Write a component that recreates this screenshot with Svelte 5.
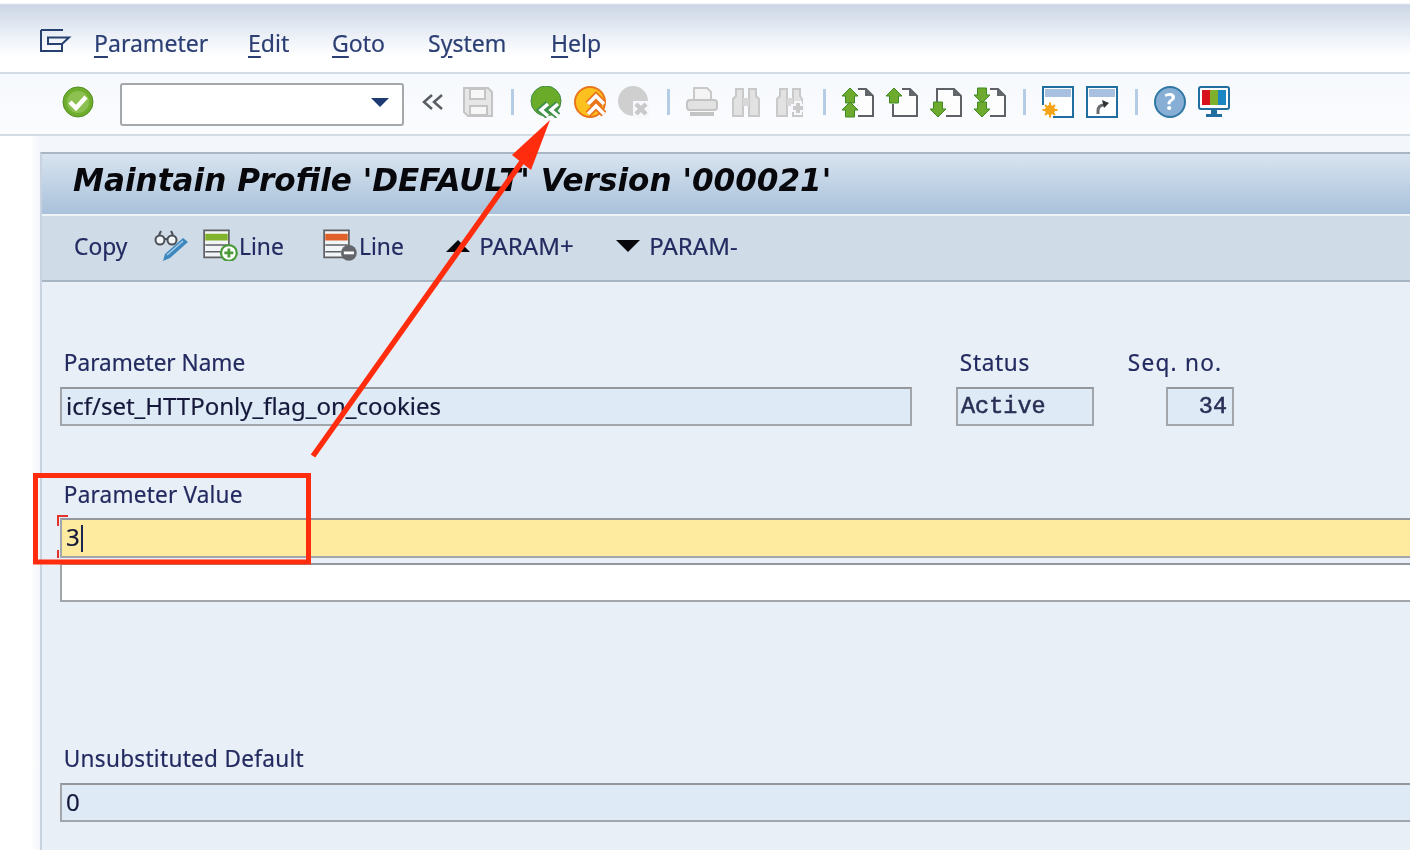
<script>
  const menus = [
    { key: "P", rest: "arameter" },
    { key: "E", rest: "dit" },
    { key: "G", rest: "oto" },
    { pre: "S", key: "y", rest: "stem" },
    { key: "H", rest: "elp" },
  ];
</script>

{#snippet doc(d)}
  <path {d} fill="#fdfdfe" stroke="#5d6064" stroke-width="2" />
  <path d="M23 2l8 8h-8z" fill="#63676b" />
{/snippet}

{#snippet arrowUp(y)}
  <path d="M8 {y}l8 8h-3.500v7h-9v-7H0z" fill="#6eaa2e" stroke="#3f8a22" />
{/snippet}

{#snippet arrowDown(y)}
  <path d="M8 {y}l8 -8h-3.500v-7h-9v7H0z" fill="#6eaa2e" stroke="#3f8a22" />
{/snippet}

<div class="screen">
  <header class="menubar soft">
    <svg class="menu-icon" width="32" height="24" viewBox="0 0 32 24">
      <path d="M1 1h22M1 1v21h21v-8M8 8.500h21l-7 6.500H8z" fill="none" stroke="#26406f" stroke-width="2" />
    </svg>
    <nav class="menus">
      {#each menus as m}
        <span class="menu">{m.pre ?? ""}<u>{m.key}</u>{m.rest}</span>
      {/each}
    </nav>
  </header>

  <div class="toolbar soft">
    <svg class="icon" viewBox="0 0 32 32">
      <circle cx="16" cy="16" r="15" fill="#6fae2d" stroke="#4f8c22" />
      <circle cx="16" cy="16" r="11" fill="#8cc152" />
      <path d="M8 16l6 6 10-11" fill="none" stroke="#fff" stroke-width="4.500" />
    </svg>
    <div class="combo"><span class="combo-arrow"></span></div>
    <svg class="icon chevrons" viewBox="0 0 32 32">
      <path d="M15 9l-8 7 8 7M25 9l-8 7 8 7" fill="none" stroke="#595e64" stroke-width="2.500" />
    </svg>

    <svg class="icon" viewBox="0 0 32 32">
      <path d="M2 2h24l4 4v24H6l-4-4z" fill="#e6e6e6" stroke="#c4c4c4" stroke-width="2" />
      <path d="M8 3h15v10H8zM8 20h17v9H8z" fill="#f7f7f7" stroke="#c4c4c4" stroke-width="2" />
    </svg>
    <i class="sep"></i>

    <div class="group">
      <svg class="icon" viewBox="0 0 32 32">
        <circle cx="16" cy="15" r="15" fill="#6bab2a" stroke="#3f8f45" />
        <path d="M18 18l-7 6 7 6M28 18l-7 6 7 6" fill="none" stroke="#3d8f4c" stroke-width="7" />
        <path d="M18 18l-7 6 7 6M28 18l-7 6 7 6" fill="none" stroke="#fff" stroke-width="3.500" />
      </svg>
      <svg class="icon" viewBox="0 0 32 32">
        <circle cx="16" cy="16" r="15" fill="#fdc11f" stroke="#e9741c" stroke-width="2" />
        <path d="M14 18l8-8 8 8M14 28l8-8 8 8" fill="none" stroke="#e9741c" stroke-width="7" />
        <path d="M14 18l8-8 8 8M14 28l8-8 8 8" fill="none" stroke="#fff" stroke-width="3.500" />
      </svg>
      <svg class="icon" viewBox="0 0 32 32">
        <circle cx="15" cy="15" r="15" fill="#cfcfcf" />
        <path d="M15 15h17v17H15z" fill="#f6f8fb" />
        <path d="M18 18l10 10M28 18L18 28" stroke="#c9c9c9" stroke-width="4.500" />
      </svg>
    </div>
    <i class="sep"></i>

    <div class="group">
      <svg class="icon" viewBox="0 0 32 32">
        <path d="M8 14V2h13l4 4v8" fill="#f4f4f4" stroke="#c9c9c9" stroke-width="2" />
        <rect x="1" y="14" width="30" height="10" rx="3" fill="#e2e2e2" stroke="#c4c4c4" stroke-width="2" />
        <path d="M4 28h24" stroke="#c4c4c4" stroke-width="4" />
      </svg>
      <svg class="icon" viewBox="0 0 32 32">
        <path d="M3 30V13l3-3V3h7v27zM19 30V3h7v7l3 3v17z" fill="#e2e2e2" stroke="#c9c9c9" stroke-width="2" />
        <path d="M13 12h6v8h-6z" fill="#d8d8d8" />
      </svg>
      <svg class="icon" viewBox="0 0 32 32">
        <path d="M3 30V13l3-3V3h7v27zM19 30V3h7v7l2 3v17z" fill="#e2e2e2" stroke="#c9c9c9" stroke-width="2" />
        <path d="M13 12h6v8h-6z" fill="#d8d8d8" />
        <path d="M24 15v14M17 22h14" stroke="#f6f8fb" stroke-width="8" />
        <path d="M24 17v10M19 22h10" stroke="#c9c9c9" stroke-width="4" />
      </svg>
    </div>
    <i class="sep"></i>

    <div class="group">
      <svg class="icon" viewBox="0 0 32 32">
        {@render doc("M16 3h8l7 7v20H16")}
        {@render arrowUp(2)}
        {@render arrowUp(16)}
      </svg>
      <svg class="icon" viewBox="0 0 32 32">
        {@render doc("M16 3h8l7 7v20H7V18")}
        {@render arrowUp(2)}
      </svg>
      <svg class="icon" viewBox="0 0 32 32">
        {@render doc("M7 16V3h17l7 7v20H16")}
        {@render arrowDown(31)}
      </svg>
      <svg class="icon" viewBox="0 0 32 32">
        {@render doc("M16 3h8l7 7v20H16")}
        {@render arrowDown(17)}
        {@render arrowDown(31)}
      </svg>
    </div>
    <i class="sep"></i>

    <div class="group">
      <svg class="icon" viewBox="0 0 32 32">
        <path d="M1 19V1h30v30H11" fill="#fff" stroke="#1f6e9f" stroke-width="2" />
        <path d="M3 3h26v8H3z" fill="#a9c1e0" />
        <circle cx="8" cy="24" r="5" fill="#f5a416" />
        <path d="M8 16.500v15M.5 24h15M3 19l10 10M13 19L3 29" stroke="#f5a416" stroke-width="2" />
      </svg>
      <svg class="icon" viewBox="0 0 32 32">
        <rect x="1" y="1" width="30" height="30" fill="#fff" stroke="#1f6e9f" stroke-width="2" />
        <path d="M3 3h26v8H3z" fill="#a9c1e0" />
        <path d="M12 28v-3c0-4 2-6 6-6" fill="none" stroke="#6a6d70" stroke-width="3" />
        <path d="M16 14l7 3-5 5z" fill="#333" />
      </svg>
    </div>
    <i class="sep"></i>

    <div class="group">
      <svg class="icon" viewBox="0 0 32 32">
        <circle cx="16" cy="16" r="15" fill="#87aed4" stroke="#2f77a5" stroke-width="2" />
        <text x="16" y="24" class="help-mark">?</text>
      </svg>
      <svg class="icon" viewBox="0 0 32 32">
        <rect x="1" y="1" width="30" height="22" rx="2" fill="#fff" stroke="#1f6e9f" stroke-width="2" />
        <path d="M4 4h8v15H4z" fill="#d8121a" />
        <path d="M12 4h8v15h-8z" fill="#7fb02c" />
        <path d="M20 4h8v15h-8z" fill="#1b86c4" />
        <path d="M13 23h6v5h-6zM8 28h16v3H8z" fill="#1f6e9f" />
      </svg>
    </div>
  </div>

  <main class="panel soft">
    <h1 class="title">Maintain Profile 'DEFAULT' Version '000021'</h1>

    <div class="actions">
      <span class="action copy">Copy</span>
      <svg class="action-icon glasses" width="34" height="31" viewBox="0 0 34 31">
        <circle cx="6" cy="10" r="4.500" fill="#f2f5f8" stroke="#4a4f56" stroke-width="2" />
        <circle cx="18" cy="10" r="4.500" fill="#f2f5f8" stroke="#4a4f56" stroke-width="2" />
        <path d="M10.500 9h3M5 5l2-4M19 5l-2-4" fill="none" stroke="#4a4f56" stroke-width="2" />
        <path d="M29 8l5 4-18 16-7 3 2-7z" fill="#3d87bf" />
        <path d="M13 25l16-14" stroke="#a8cdea" stroke-width="1.500" />
      </svg>
      <svg class="action-icon line-add" width="36" height="32" viewBox="0 0 32 28">
        <path d="M1 1h22v24H1z" fill="#f2f5f8" stroke="#5e6064" stroke-width="1.500" />
        <path d="M2 4h20v6H2z" fill="#82b32d" />
        <path d="M2 14h20M2 20h14" stroke="#5e6064" stroke-width="1.500" />
        <circle cx="23" cy="21" r="7" fill="#fff" stroke="#4a9a3a" stroke-width="2" />
        <path d="M23 17v8M19 21h8" stroke="#4a9a3a" stroke-width="2.500" />
      </svg>
      <span class="action after-icon">Line</span>
      <svg class="action-icon line-del" width="36" height="32" viewBox="0 0 32 28">
        <path d="M1 1h22v24H1z" fill="#f2f5f8" stroke="#5e6064" stroke-width="1.500" />
        <path d="M2 4h20v6H2z" fill="#e0602a" />
        <path d="M2 14h20M2 20h14" stroke="#5e6064" stroke-width="1.500" />
        <circle cx="23" cy="21" r="7" fill="#63666a" />
        <path d="M18.500 21h9" stroke="#fff" stroke-width="2.500" />
      </svg>
      <span class="action after-icon">Line</span>
      <span class="tri tri-up"></span>
      <span class="action param">PARAM+</span>
      <span class="tri tri-down"></span>
      <span class="action param">PARAM-</span>
    </div>

    <section class="form">
      <div class="row">
        <div class="field name">
          <span class="label">Parameter Name</span>
          <div class="input readonly">icf/set_HTTPonly_flag_on_cookies</div>
        </div>
        <div class="field status">
          <span class="label">Status</span>
          <div class="input readonly mono">Active</div>
        </div>
        <div class="field seq">
          <span class="label">Seq. no.</span>
          <div class="input readonly mono number">34</div>
        </div>
      </div>

      <div class="field value">
        <span class="label">Parameter Value</span>
        <div class="input focused">3<span class="caret"></span></div>
        <i class="req req-top"></i>
        <i class="req req-bottom"></i>
        <div class="input blank"></div>
      </div>

      <div class="field default">
        <span class="label">Unsubstituted Default</span>
        <div class="input readonly">0</div>
      </div>
    </section>
  </main>

  <svg class="annotation" width="1410" height="850" viewBox="0 0 1410 850">
    <path d="M35.500 475.500h273v86.500h-273z" fill="none" stroke="#ff2d0d" stroke-width="5" />
    <path d="M313 456L526 156" stroke="#ff2d0d" stroke-width="5.500" />
    <path d="M550 120L512 155 531 170z" fill="#ff2d0d" />
  </svg>
</div>

<style>
  :global(body) {
    margin: 0;
    background: #fff;
  }

  .screen {
    position: relative;
    width: 1410px;
    height: 850px;
    overflow: hidden;
    font-family: "Noto Sans", "Open Sans", sans-serif;
    color: #20265a;
    background: linear-gradient(90deg, #fff 0, #fff 30px, #f3f6fa 40px);
  }

  /* the reference is an upscaled capture, so everything under the markup is a bit soft */
  .soft {
    filter: blur(0.5px);
  }

  .menubar {
    box-sizing: border-box;
    display: flex;
    align-items: center;
    height: 74px;
    padding: 14px 0 0 40px;
    background: linear-gradient(180deg, #fff 0, #fff 3px, #ccd6e6 5px, #eef2f8 38px, #fff 56px);
    border-bottom: 2px solid #d3dbe5;
  }

  .menu-icon {
    margin-top: -4px;
  }

  .menus {
    display: flex;
    gap: 41px;
    margin-left: 22px;
  }

  .menu {
    font-size: 24px;
    line-height: 30px;
    color: #2c3f74;
    -webkit-text-stroke: 0.2px #2c3f74;
    transform: scaleX(0.96);
    transform-origin: left;
  }

  .menu:first-child {
    margin-right: -6px;
  }

  .menu u {
    text-underline-offset: 4px;
  }

  .toolbar {
    box-sizing: border-box;
    display: flex;
    align-items: center;
    height: 62px;
    padding: 0 0 4px 62px;
    background: linear-gradient(180deg, #f6f9fd, #fbfcfe);
    border-bottom: 2px solid #d3dbe5;
  }

  .icon {
    display: block;
    width: 32px;
    height: 32px;
    flex: none;
  }

  .group {
    display: flex;
    gap: 12px;
  }

  .sep {
    width: 3px;
    height: 26px;
    margin: 0 16.500px;
    background: #b4cde4;
    flex: none;
  }

  .combo {
    box-sizing: border-box;
    position: relative;
    width: 284px;
    height: 43px;
    margin: 4px 0 0 26px;
    background: #fff;
    border: 2px solid #a5a8ab;
    border-radius: 3px;
  }

  .combo-arrow {
    position: absolute;
    right: 13px;
    top: 13px;
    border-top: 9px solid #1d3a72;
    border-left: 9px solid transparent;
    border-right: 9px solid transparent;
  }

  .chevrons {
    margin: 0 13px;
  }

  .help-mark {
    font: bold 23px "Open Sans", sans-serif;
    fill: #fff;
    text-anchor: middle;
  }

  .panel {
    box-sizing: border-box;
    height: 715px;
    margin: 16px 0 0 40px;
    background: #e9eff6;
    border-left: 2px solid #c9d3e0;
    border-top: 2px solid #a8b5c3;
  }

  .title {
    box-sizing: border-box;
    height: 60px;
    margin: 0;
    padding-left: 31px;
    font: italic bold 31.100px/53px "DejaVu Sans", sans-serif;
    color: #08080c;
    white-space: nowrap;
    background: linear-gradient(180deg, #d8e4f0, #a9c1da);
  }

  .actions {
    box-sizing: border-box;
    display: flex;
    align-items: center;
    height: 68px;
    padding: 0 0 5px 32px;
    background: #cfdce8;
    border-top: 2px solid #eef3f8;
    border-bottom: 2px solid #a8b6c4;
  }

  .action {
    font-size: 24px;
    line-height: 30px;
    color: #222a60;
    -webkit-text-stroke: 0.2px #222a60;
    transform: scaleX(0.95);
    transform-origin: left;
    white-space: nowrap;
  }

  .action-icon {
    flex: none;
  }

  .glasses {
    margin-left: 24px;
  }

  .line-add {
    margin: -2px 0 0 15px;
  }

  .line-del {
    margin: -2px 0 0 38px;
  }

  .after-icon {
    margin-left: 0;
    width: 46px;
  }

  .tri {
    width: 0;
    height: 0;
    border-left: 12px solid transparent;
    border-right: 12px solid transparent;
  }

  .tri-up {
    margin: 0 9px 0 41px;
    border-bottom: 12px solid #08080c;
  }

  .tri-down {
    margin: 0 9px 0 0;
    border-top: 12px solid #08080c;
  }

  .param {
    width: 137px;
    transform: none;
  }

  .form {
    padding: 66px 0 0 18px;
  }

  .row {
    display: flex;
  }

  .field {
    position: relative;
  }

  .label {
    display: block;
    height: 30px;
    margin-bottom: 9px;
    padding-left: 4px;
    font-size: 23.500px;
    line-height: 28px;
    color: #222a60;
    -webkit-text-stroke: 0.2px #222a60;
    white-space: nowrap;
    transform: scaleX(0.96);
    transform-origin: left;
  }

  .status .label {
    letter-spacing: 0.7px;
  }

  .seq .label {
    letter-spacing: 1.3px;
  }

  .value .label {
    letter-spacing: 0.2px;
  }

  .default .label {
    letter-spacing: 0.3px;
  }

  .input {
    box-sizing: border-box;
    height: 39px;
    padding-left: 4px;
    border: 2px solid #a2a6aa;
    border-top-color: #94989c;
    font-size: 24px;
    line-height: 34px;
    color: #15183a;
    -webkit-text-stroke: 0.2px #15183a;
    white-space: nowrap;
  }

  .readonly {
    background: #deeaf5;
  }

  .mono {
    font-family: "Liberation Mono", monospace;
    font-size: 23.500px;
    line-height: 36px;
    color: #2a2f55;
    padding-left: 3px;
    -webkit-text-stroke: 0.5px #2a2f55;
  }

  .number {
    text-align: right;
    padding-right: 5px;
  }

  .name {
    width: 852px;
  }

  .status {
    width: 138px;
    margin-left: 44px;
  }

  .seq {
    margin-left: 30px;
    width: 110px;
  }

  .seq .input {
    width: 68px;
    margin-left: 42px;
  }

  .value {
    width: 1400px;
    margin-top: 54px;
  }

  .value .label {
    margin-bottom: 8px;
  }

  .focused {
    height: 40px;
    background: #feeb9f;
  }

  .caret {
    display: inline-block;
    width: 2px;
    height: 27px;
    margin-left: 1px;
    vertical-align: -6px;
    background: #1b2450;
  }

  .blank {
    height: 39px;
    margin-top: 5px;
    background: #fff;
  }

  .req {
    position: absolute;
    left: -3px;
    background: #e0342a;
  }

  .req-top {
    top: 35px;
    width: 11px;
    height: 2px;
  }

  .req-top::after {
    content: "";
    position: absolute;
    top: 0;
    left: 0;
    width: 2px;
    height: 11px;
    background: #e0342a;
  }

  .req-bottom {
    top: 70px;
    width: 2px;
    height: 8px;
  }

  .default {
    width: 1400px;
    margin-top: 142px;
  }

  .annotation {
    position: absolute;
    top: 0;
    left: 0;
    pointer-events: none;
  }
</style>
